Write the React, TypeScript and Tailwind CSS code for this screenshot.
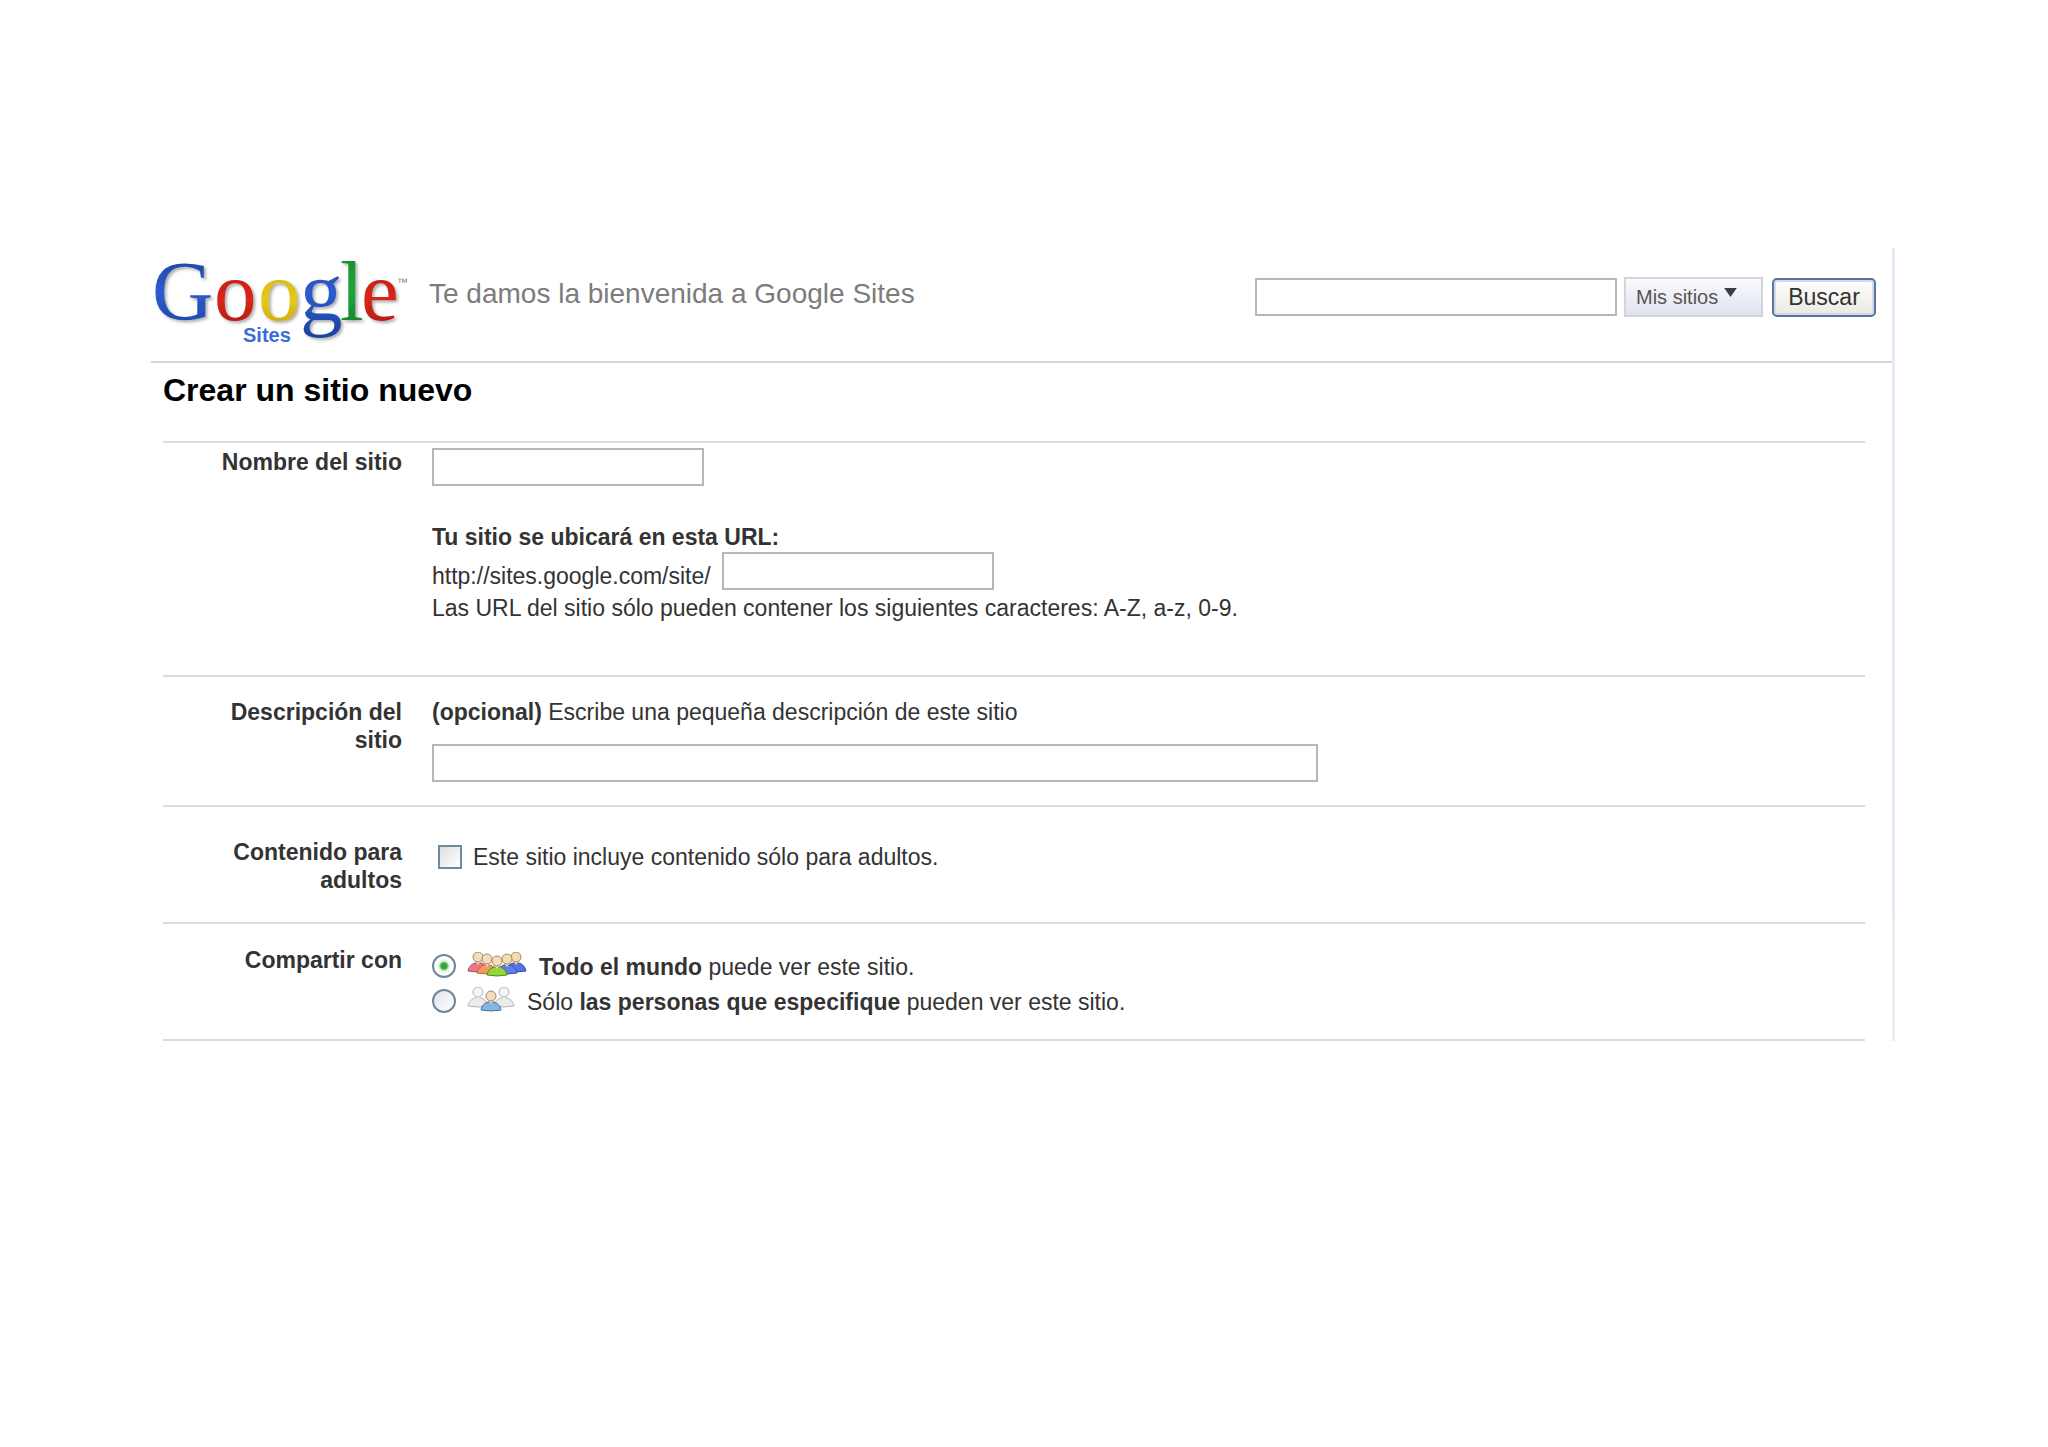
import { useId } from "react";
import type { ReactNode } from "react";

const FIELD =
  "h-[38px] border-2 border-[#b4b8ba] bg-white px-2 text-[23px] text-[#333] outline-none focus:border-[#7f9db9]";

function GoogleLogo() {
  return (
    <svg
      viewBox="0 -10 268 122"
      className="-mt-[10px] h-[122px] w-[268px] shrink-0"
      role="img"
      aria-label="Google Sites"
    >
      <defs>
        <linearGradient id="blue" x1="0" y1="0" x2="0" y2="1">
          <stop offset="0" stopColor="#1b3f88" />
          <stop offset="0.5" stopColor="#2c5cd0" />
          <stop offset="1" stopColor="#1c429e" />
        </linearGradient>
        <linearGradient id="red" x1="0" y1="0" x2="0" y2="1">
          <stop offset="0" stopColor="#b8120f" />
          <stop offset="0.6" stopColor="#d6281a" />
          <stop offset="1" stopColor="#a8120e" />
        </linearGradient>
        <linearGradient id="yellow" x1="0" y1="0" x2="0" y2="1">
          <stop offset="0" stopColor="#c9a600" />
          <stop offset="0.6" stopColor="#e6c81c" />
          <stop offset="1" stopColor="#c09e00" />
        </linearGradient>
        <linearGradient id="green" x1="0" y1="0" x2="0" y2="1">
          <stop offset="0" stopColor="#12862c" />
          <stop offset="0.5" stopColor="#1fa63e" />
          <stop offset="1" stopColor="#0d7a24" />
        </linearGradient>
        <filter id="shade" x="-5%" y="-5%" width="115%" height="120%">
          <feDropShadow
            dx="2"
            dy="2"
            stdDeviation="1.4"
            floodColor="#555"
            floodOpacity="0.5"
          />
        </filter>
      </defs>
      <g
        filter="url(#shade)"
        fontFamily="'Liberation Serif', serif"
        fontSize="85"
      >
        <text x="1" y="72" fill="url(#blue)">G</text>
        <text x="63" y="72" fill="url(#red)">o</text>
        <text x="107" y="72" fill="url(#yellow)">o</text>
        <text x="149" y="72" fill="url(#blue)">g</text>
        <text x="189" y="72" fill="url(#green)">l</text>
        <text x="210" y="72" fill="url(#red)">e</text>
      </g>
      <text
        x="92"
        y="94"
        fill="#3d6bd8"
        fontFamily="'Liberation Sans', sans-serif"
        fontWeight="700"
        fontSize="20"
      >
        Sites
      </text>
      <text
        x="246"
        y="38"
        fill="#777"
        fontFamily="'Liberation Sans', sans-serif"
        fontSize="11"
      >
        ™
      </text>
    </svg>
  );
}

function Person({
  x,
  y,
  body,
  line,
  head = "#f4dcc0",
  headLine = "#a58a66",
}: {
  x: number;
  y: number;
  body: string;
  line: string;
  head?: string;
  headLine?: string;
}) {
  return (
    <g transform={`translate(${x} ${y})`}>
      <path
        d="M-10 19 C-9 14 -6 12 -3 11 L3 11 C6 12 9 14 10 19 Q0 21 -10 19Z"
        fill={body}
        stroke={line}
      />
      <path d="M-3 9 L0 13 L3 9Z" fill={head} />
      <ellipse cx="0" cy="5" rx="5" ry="5" fill={head} stroke={headLine} />
    </g>
  );
}

function EveryoneIcon() {
  return (
    <svg viewBox="0 2 60 28" className="h-7 w-[60px] shrink-0" aria-hidden="true">
      <Person x={11} y={2} body="#e8798c" line="#b0485c" />
      <Person x={49} y={2} body="#5574e0" line="#3450b4" head="#f2deb0" />
      <Person x={20} y={4} body="#f09a5c" line="#c06430" />
      <Person x={40} y={4} body="#5f7fe4" line="#3450b4" head="#f2deb0" />
      <Person x={30} y={6} body="#96d636" line="#55851c" />
    </svg>
  );
}

function RestrictedIcon() {
  return (
    <svg viewBox="0 2 48 28" className="h-7 w-12 shrink-0" aria-hidden="true">
      <Person x={11} y={2} body="#ececec" line="#b4b4b4" head="#f5f5f5" headLine="#b4b4b4" />
      <Person x={37} y={2} body="#ececec" line="#b4b4b4" head="#f5f5f5" headLine="#b4b4b4" />
      <Person x={24} y={6} body="#86b4e2" line="#466e9c" />
    </svg>
  );
}

function FormRow({
  label,
  htmlFor,
  className,
  children,
}: {
  label: string;
  htmlFor?: string;
  className: string;
  children: ReactNode;
}) {
  return (
    <div
      className={`grid grid-cols-[239px_1fr] gap-x-[30px] border-t-2 border-[#dcdadd] ${className}`}
    >
      <label htmlFor={htmlFor} className="pl-10 text-right font-bold">
        {label}
      </label>
      <div>{children}</div>
    </div>
  );
}

function ShareOption({
  id,
  icon,
  defaultChecked,
  children,
}: {
  id: string;
  icon: ReactNode;
  defaultChecked?: boolean;
  children: ReactNode;
}) {
  return (
    <label htmlFor={id} className="flex items-center">
      <input
        id={id}
        type="radio"
        name="share"
        defaultChecked={defaultChecked}
        className="mr-[11px] size-6 shrink-0 appearance-none rounded-full border-2 border-[#6f8798] bg-[linear-gradient(135deg,#dfe3ea,#ffffff)] checked:bg-[radial-gradient(circle,#2f9a35_0,#3cae42_3px,#dff3df_5px,#ffffff_8px)]"
      />
      {icon}
      <span className="ml-3 pt-[3px]">{children}</span>
    </label>
  );
}

export default function App() {
  const id = useId();

  return (
    <div className="flex pt-[248px] pr-[153px] pb-16 pl-[151px] font-['Liberation_Sans',Arial,sans-serif] text-[23px] leading-7 text-[#333]">
      <main className="min-w-0 flex-1">
        {/* ---- Header ---- */}
        <header className="flex h-[115px] items-start border-b-2 border-[#d6d4d4] pr-4">
          <GoogleLogo />
          <p className="ml-[10px] pt-[30px] text-[28px] leading-8 whitespace-nowrap text-[#7c7c7c]">
            Te damos la bienvenida a Google Sites
          </p>
          <form
            className="ml-auto flex items-center gap-[7px] pt-[29px]"
            onSubmit={(e) => e.preventDefault()}
          >
            <input
              type="text"
              aria-label="Buscar en sitios"
              className={`${FIELD} w-[362px]`}
            />
            <div className="relative">
              <select
                aria-label="Ámbito de búsqueda"
                className="block h-10 w-[139px] appearance-none border-2 border-[#d3d5da] bg-linear-to-b from-[#fafafc] to-[#e0e3f0] pl-[10px] text-[20px] text-[#555] outline-none"
              >
                <option>Mis sitios</option>
              </select>
              <svg
                viewBox="0 0 14 10"
                className="pointer-events-none absolute top-[11px] right-[26px] h-[9px] w-[13px]"
                aria-hidden="true"
              >
                <path d="M0 0 H14 L7 10Z" fill="#3c3c48" />
              </svg>
            </div>
            <button
              type="submit"
              className="ml-[2px] h-[39px] w-[104px] rounded-[5px] border-2 border-[#5c7391] bg-linear-to-b from-white to-[#ece9e0] text-[23px] leading-7 text-[#333] shadow-[inset_0_0_0_2px_#cfdcf0]"
            >
              Buscar
            </button>
          </form>
        </header>

        {/* ---- Form ---- */}
        <form
          className="mr-[27px] ml-3 border-b-2 border-[#dcdadd]"
          onSubmit={(e) => e.preventDefault()}
        >
          <h1 className="pt-[9px] pb-[33px] text-[32px] leading-9 font-bold text-black">
            Crear un sitio nuevo
          </h1>

          <FormRow label="Nombre del sitio" htmlFor={`${id}-name`} className="pt-[5px] pb-[53px]">
            <input id={`${id}-name`} type="text" className={`${FIELD} block w-[272px]`} />
            <label htmlFor={`${id}-url`} className="mt-[37px] block font-bold">
              Tu sitio se ubicará en esta URL:
            </label>
            <div className="mt-px flex items-end gap-[11px]">
              <span>http://sites.google.com/site/</span>
              <input id={`${id}-url`} type="text" className={`${FIELD} w-[272px]`} />
            </div>
            <p className="mt-1">
              Las URL del sitio sólo pueden contener los siguientes caracteres: A-Z, a-z, 0-9.
            </p>
          </FormRow>

          <FormRow
            label="Descripción del sitio"
            htmlFor={`${id}-description`}
            className="pt-[21px] pb-[23px]"
          >
            <p>
              <b>(opcional)</b> Escribe una pequeña descripción de este sitio
            </p>
            <input
              id={`${id}-description`}
              type="text"
              className={`${FIELD} mt-[18px] block w-full max-w-[886px]`}
            />
          </FormRow>

          <FormRow
            label="Contenido para adultos"
            htmlFor={`${id}-adult`}
            className="pt-[31px] pb-7"
          >
            <label htmlFor={`${id}-adult`} className="flex items-center pt-[5px] pl-[6px]">
              <input
                id={`${id}-adult`}
                type="checkbox"
                className="mr-[11px] size-6 appearance-none border-2 border-[#6f8b98] bg-[linear-gradient(135deg,#dcdfe0,#ffffff)] checked:bg-[#3cae42]"
              />
              Este sitio incluye contenido sólo para adultos.
            </label>
          </FormRow>

          <FormRow
            label="Compartir con"
            htmlFor={`${id}-everyone`}
            className="pt-[22px] pb-[23px]"
          >
            <div className="flex flex-col gap-1 pt-1" role="radiogroup" aria-label="Compartir con">
              <ShareOption id={`${id}-everyone`} icon={<EveryoneIcon />} defaultChecked>
                <b>Todo el mundo</b> puede ver este sitio.
              </ShareOption>
              <ShareOption id={`${id}-restricted`} icon={<RestrictedIcon />}>
                Sólo <b>las personas que especifique</b> pueden ver este sitio.
              </ShareOption>
            </div>
          </FormRow>
        </form>
      </main>

      {/* right edge of the window */}
      <div className="w-[3px] shrink-0 bg-[linear-gradient(to_bottom,#e2ebf6_84%,#efedea_84%)]" />
    </div>
  );
}
